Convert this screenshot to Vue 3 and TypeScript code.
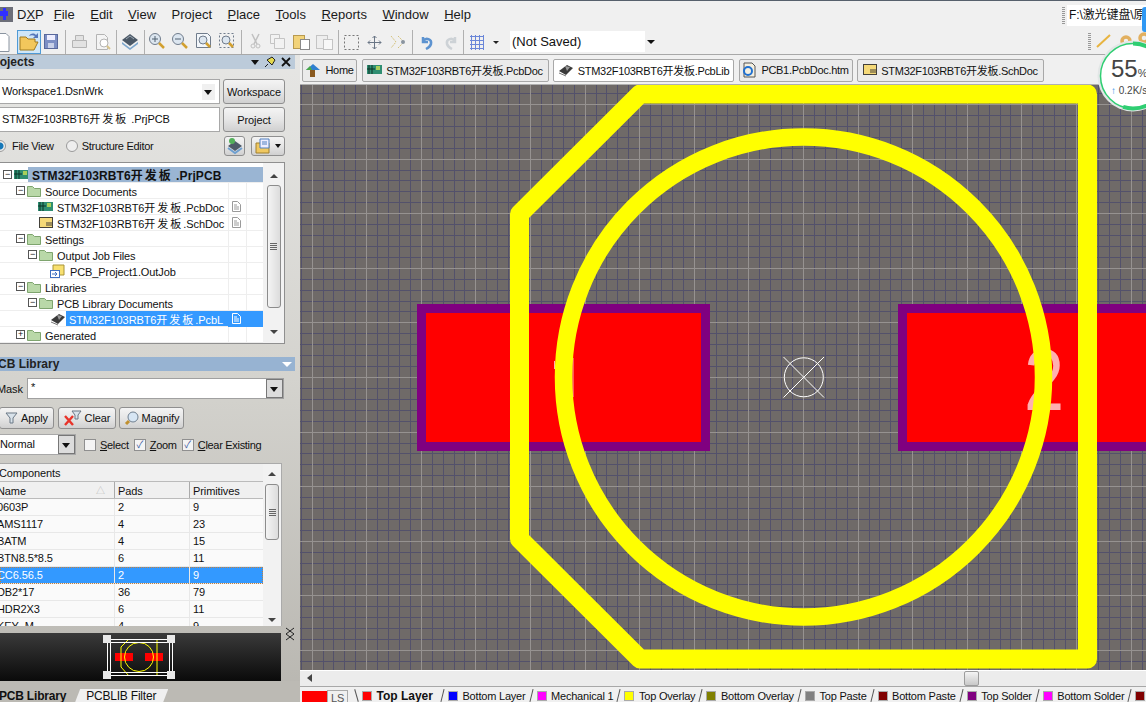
<script setup lang="ts">
const menus = [
  { pre: '', key: 'F', post: 'ile' },
  { pre: '', key: 'E', post: 'dit' },
  { pre: '', key: 'V', post: 'iew' },
  { pre: 'Pro', key: 'j', post: 'ect' },
  { pre: '', key: 'P', post: 'lace' },
  { pre: '', key: 'T', post: 'ools' },
  { pre: '', key: 'R', post: 'eports' },
  { pre: '', key: 'W', post: 'indow' },
  { pre: '', key: 'H', post: 'elp' }
]

const docTabs = [
  { label: 'Home', kind: 'home', active: false, w: 55 },
  { label: 'STM32F103RBT6开发板.PcbDoc', kind: 'pcb', active: false, w: 187 },
  { label: 'STM32F103RBT6开发板.PcbLib', kind: 'lib', active: true, w: 181 },
  { label: 'PCB1.PcbDoc.htm', kind: 'htm', active: false, w: 114 },
  { label: 'STM32F103RBT6开发板.SchDoc', kind: 'sch', active: false, w: 187 }
]

interface TreeRow {
  label: string
  indent: number
  sign: string
  icon: string
  selected?: boolean
  root?: boolean
  doc?: boolean
}

const tree: TreeRow[] = [
  { label: 'STM32F103RBT6开发板 .PrjPCB', indent: 3, sign: '-', icon: 'pcb', root: true },
  { label: 'Source Documents', indent: 16, sign: '-', icon: 'folder' },
  { label: 'STM32F103RBT6开发板.PcbDoc', indent: 38, sign: '', icon: 'pcb', doc: true },
  { label: 'STM32F103RBT6开发板.SchDoc', indent: 39, sign: '', icon: 'sch', doc: true },
  { label: 'Settings', indent: 16, sign: '-', icon: 'folder' },
  { label: 'Output Job Files', indent: 28, sign: '-', icon: 'folder' },
  { label: 'PCB_Project1.OutJob', indent: 50, sign: '', icon: 'job' },
  { label: 'Libraries', indent: 16, sign: '-', icon: 'folder' },
  { label: 'PCB Library Documents', indent: 28, sign: '-', icon: 'folder' },
  { label: 'STM32F103RBT6开发板.PcbL', indent: 50, sign: '', icon: 'lib', selected: true, doc: true },
  { label: 'Generated', indent: 16, sign: '+', icon: 'folder' }
]

const components = [
  { name: '0603P', pads: 2, prims: 9 },
  { name: 'AMS1117', pads: 4, prims: 23 },
  { name: 'BATM', pads: 4, prims: 15 },
  { name: 'BTN8.5*8.5', pads: 6, prims: 11 },
  { name: 'CC6.56.5', pads: 2, prims: 9, selected: true },
  { name: 'DB2*17', pads: 36, prims: 79 },
  { name: 'HDR2X3', pads: 6, prims: 11 },
  { name: 'KEY_M', pads: 4, prims: 9 }
]

const layers = [
  { name: 'Top Layer', color: '#ff0000', bold: true },
  { name: 'Bottom Layer', color: '#0000ff' },
  { name: 'Mechanical 1', color: '#ff00ff' },
  { name: 'Top Overlay', color: '#ffff00' },
  { name: 'Bottom Overlay', color: '#808000' },
  { name: 'Top Paste', color: '#808080' },
  { name: 'Bottom Paste', color: '#800000' },
  { name: 'Top Solder', color: '#800080' },
  { name: 'Bottom Solder', color: '#ff00ff' },
  { name: '', color: '#800000' }
]

// wide CJK characters get their own span, the reference spaces them out
function segments(label: string) {
  return label.split(/([\u4e00-\u9fff]+)/).filter(Boolean).map((text) => ({
    text,
    cjk: /[\u4e00-\u9fff]/.test(text)
  }))
}

// grid lines snapped to whole pixels, every 5th one is the bright one
const gridStep = 10.92
const originX = 803
const originY = 377
const gridX: { at: number; major: boolean }[] = []
const gridY: { at: number; major: boolean }[] = []
for (let k = -46; k <= 32; k++) {
  gridX.push({ at: Math.round(originX + k * gridStep) + 0.5, major: k % 5 === 0 })
}
for (let k = -27; k <= 27; k++) {
  gridY.push({ at: Math.round(originY + k * gridStep) + 0.5, major: k % 5 === 0 })
}
</script>

<template>
  <div class="app">
    <header class="menubar">
      <svg class="dxp-logo" width="13" height="15" viewBox="0 0 13 15">
        <rect width="13" height="15" fill="#6c6e78" />
        <path d="M0 4h3V1h3v3h2v5H6v4H3V9H0z" fill="#3030ff" />
      </svg>
      <span class="menu-item dxp">D<u>X</u>P</span>
      <span v-for="m in menus" :key="m.post" class="menu-item">{{ m.pre }}<u>{{ m.key }}</u>{{ m.post }}</span>
      <div class="path-box">
        <span class="grip"></span>
        <span class="path-text">F:\激光键盘\原</span>
      </div>
      <span class="blue-tab"></span>
    </header>

    <div class="toolbar">
      <svg class="tb-svg" width="506" height="28" viewBox="0 0 506 28">
        <!-- new, open, save -->
        <path d="M-4 5.500h10l3 3v15h-13z" fill="#fff" stroke="#8a94a0" />
        <rect x="17.500" y="2.500" width="23" height="23" fill="#cfe6f8" stroke="#4f9ad6" />
        <path d="M20 22v-13h6l2 2h7v3h3l-4 8z" fill="#f2c75c" stroke="#a07a20" />
        <path d="M29 8c2-3 5-3 7-1l2-2v5h-5l2-2c-2-1-4-1-6 0z" fill="#5577bb" />
        <rect x="44.500" y="6.500" width="13" height="14" fill="#7d8fc4" stroke="#59689c" />
        <rect x="47" y="7" width="8" height="5" fill="#eef" />
        <rect x="48" y="15" width="6" height="5" fill="#c8d0e8" />
        <g fill="#e2e2e2" stroke="#b4b4b4">
          <path d="M72.500 12.500h14v7h-14z" /><path d="M75.500 7.500h8v5h-8z" />
          <path d="M96.500 6.500h8l3 3v12h-11z" fill="#f4f4f4" />
          <circle cx="104" cy="15" r="4" fill="#fff" />
        </g>
        <path d="M107 18l3 3" stroke="#d8c48c" stroke-width="2" />
        <path d="M122 12l8-6 8 6-8 6z" fill="#4b5866" />
        <path d="M122 14l8 6 8-6v2l-8 6-8-6z" fill="#7da6cc" />
        <path d="M126 11l4-3 4 3" stroke="#9aa6b2" fill="none" />
        <g fill="#dce6f0" stroke="#707c8c">
          <circle cx="155" cy="11" r="5.500" /><circle cx="178" cy="11" r="5.500" />
          <path d="M196.500 5.500h11l3 3v11h-14z" fill="#f2f6fa" />
          <circle cx="203" cy="12" r="4" />
          <rect x="219.500" y="5.500" width="14" height="14" fill="none" stroke-dasharray="2 2" />
          <circle cx="226" cy="12" r="4" />
        </g>
        <path d="M152 11h6M155 8v6M175 11h6" stroke="#506070" fill="none" />
        <path d="M159 15l5 5M182 15l5 5M206 15l4 4M229 15l4 4" stroke="#d2a030" stroke-width="2.500" fill="none" />
        <path d="M252 6l5 10M259 6l-5 10" stroke="#c0c0c0" stroke-width="1.500" fill="none" />
        <circle cx="253" cy="18" r="2" fill="none" stroke="#c0c0c0" /><circle cx="258" cy="18" r="2" fill="none" stroke="#c0c0c0" />
        <path d="M270.500 6.500h9v9h-9z" fill="#f2f2f2" stroke="#c4c4c4" />
        <path d="M274.500 10.500h10v10h-10z" fill="#f2f2f2" stroke="#c4c4c4" />
        <rect x="293.500" y="7.500" width="11" height="13" fill="#f2d37a" stroke="#b89a50" />
        <rect x="300.500" y="11.500" width="9" height="10" fill="#fff" stroke="#8a8a8a" />
        <rect x="316.500" y="7.500" width="11" height="13" fill="#eee" stroke="#c4c4c4" />
        <rect x="323.500" y="11.500" width="9" height="10" fill="#f8f8f8" stroke="#c4c4c4" />
        <g stroke="#b0b0b0" fill="none">
          <path d="M65.500 2v24M116.500 2v24M144.500 2v24M241.500 2v24M338.500 2v24" />
          <path d="M412.500 2v24M463.500 2v24" />
        </g>
        <rect x="344.500" y="7.500" width="14" height="14" fill="none" stroke="#777" stroke-dasharray="2 2" />
        <path d="M374.500 8v13M368 14.500h13M372.500 10l2-2 2 2M372.500 19l2 2 2-2M370 12.500l-2 2 2 2M379 12.500l2 2-2 2" stroke="#6a7686" fill="none" />
        <path d="M391 8l5 6-5 6M398 8l6 6-6 6" stroke="#d4c27c" fill="none" stroke-dasharray="2 1" />
        <circle cx="403" cy="14" r="2" fill="#8a94a0" />
        <path d="M423 9v5h5M423 13c3-4 9-2 8 3-1 3-3 4-5 5" stroke="#5d93d0" stroke-width="2.500" fill="none" />
        <path d="M455 9v5h-5M455 13c-3-4-9-2-8 3 1 3 3 4 5 5" stroke="#cdd2d6" stroke-width="2.500" fill="none" />
        <path d="M470 8.500h14M470 12.500h14M470 16.500h14M470 20.500h14M471.500 7v15M475.500 7v15M479.500 7v15M483.500 7v15" stroke="#6a86d8" fill="none" />
        <path d="M493 13h6l-3 3z" fill="#222" />
      </svg>
      <div class="saved-box"><span>(Not Saved)</span><span class="saved-arrow"></span></div>
      <div class="tb-right">
        <span class="grip-v"></span>
        <svg width="53" height="26" viewBox="0 0 53 26">
          <path d="M4 19L17 7" stroke="#e8b440" stroke-width="2" />
          <circle cx="33" cy="13" r="4" fill="none" stroke="#e2b060" stroke-width="3.500" />
          <circle cx="51" cy="10" r="4" fill="none" stroke="#e2b060" stroke-width="3.500" />
        </svg>
      </div>
    </div>

    <main class="workspace">
      <aside class="sidebar">
        <div class="panel-head light">
          <span class="cut-more">Projects</span>
          <span class="head-icons">
            <span class="arrow-down"></span>
            <svg width="12" height="12" viewBox="0 0 12 12"><path d="M1 11l3-3M3 4l5-3 3 3-3 5z" fill="#e4d94e" stroke="#222" /></svg>
            <svg width="10" height="10" viewBox="0 0 10 10"><path d="M1 1l8 8M9 1l-8 8" stroke="#111" stroke-width="1.800" /></svg>
          </span>
        </div>

        <div class="proj-row">
          <div class="field">Workspace1.DsnWrk<span class="field-arrow"></span></div>
          <button class="btn wide">Workspace</button>
        </div>
        <div class="proj-row">
          <div class="field">STM32F103RBT6<span class="cjk">开发板</span> .PrjPCB</div>
          <button class="btn wide">Project</button>
        </div>
        <div class="view-row">
          <span class="radio on"></span><span class="view-a">File View</span>
          <span class="radio"></span><span class="view-b">Structure Editor</span>
          <span class="spacer"></span>
          <button class="btn ico">
            <svg width="18" height="18" viewBox="0 0 18 18"><path d="M2 9l7-5 7 5-7 5z" fill="#4d5a68" /><path d="M2 11l7 5 7-5" fill="none" stroke="#6fa0d0" stroke-width="2" /><circle cx="6" cy="4" r="3" fill="#52b05a" /></svg>
          </button>
          <button class="btn ico two">
            <svg width="17" height="18" viewBox="0 0 17 18"><path d="M1 6h13v10H1z" fill="#f0c860" stroke="#a08030" /><path d="M5 2h9v9H5z" fill="#eef" stroke="#5080c0" /><path d="M7 5h5M7 7h5" stroke="#5080c0" /></svg>
            <span class="mini-arrow"></span>
          </button>
        </div>

        <div class="tree-box">
          <div class="tree-rows">
            <div v-for="r in tree" :key="r.label + r.indent" class="tree-row">
              <div class="tree-main" :style="{ paddingLeft: r.indent + 'px' }">
                <span v-if="r.sign" class="sign">{{ r.sign === '+' ? '+' : '−' }}</span>
                <svg v-if="r.icon === 'folder'" class="t-icon" width="14" height="12" viewBox="0 0 14 12"><path d="M0.500 11.500v-10h5l2 2h6v8z" fill="#b9d8a8" stroke="#7ea46e" /></svg>
                <svg v-else-if="r.icon === 'pcb'" class="t-icon" width="15" height="12" viewBox="0 0 15 12"><rect x="0" y="1" width="15" height="9" fill="#2f8e72" /><path d="M2 1v9M5 1v9M0 5h8" stroke="#0c3528" /><rect x="9" y="2" width="4" height="4" fill="#a8d05a" /></svg>
                <svg v-else-if="r.icon === 'sch'" class="t-icon" width="14" height="12" viewBox="0 0 14 12"><rect x="0.500" y="0.500" width="13" height="10" fill="#f5d978" stroke="#44413a" /><path d="M7 8h6M7 6h6" stroke="#44413a" /></svg>
                <svg v-else-if="r.icon === 'job'" class="t-icon" width="16" height="14" viewBox="0 0 16 14"><path d="M3 1h11v10H3z" fill="#f8e070" stroke="#a89438" /><rect x="0.500" y="6.500" width="9" height="7" fill="#fff" stroke="#4070c0" /><path d="M2 10h5M5 8l2 2-2 2" stroke="#4070c0" fill="none" /></svg>
                <svg v-else class="t-icon" width="16" height="14" viewBox="0 0 16 14"><path d="M1 8l8-6 6 3-7 7z" fill="#3a3a3a" /><path d="M7 3l5 1-3 4z" fill="#9a9a9a" /><path d="M1 10l7 3" stroke="#777" /></svg>
                <span class="t-label" :class="{ root: r.root, sel: r.selected }">
                  <span v-for="(s, i) in segments(r.label)" :key="i" :class="{ cjk: s.cjk }">{{ s.text }}</span>
                </span>
              </div>
              <template v-if="!r.root">
                <span class="t-cell" :class="{ sel: r.selected }">
                  <svg v-if="r.doc" width="9" height="11" viewBox="0 0 9 11"><path d="M0.500 0.500h5l3 3v7h-8zM2 4h3M2 6h5M2 8h5" fill="none" :stroke="r.selected ? '#fff' : '#9a9a9a'" /></svg>
                </span>
                <span class="t-cell narrow" :class="{ sel: r.selected }"></span>
              </template>
            </div>
          </div>
          <div class="scroll-v">
            <span class="tri-up"></span>
            <div class="thumb tree-thumb"><span class="thumb-grip"></span></div>
            <span class="tri-down"></span>
          </div>
        </div>

        <div class="panel-head blue">
          <span>PCB Library</span>
          <span class="arrow-down white"></span>
        </div>

        <div class="mask-row">
          <span class="mask-label">Mask</span>
          <div class="mask-field">*<span class="combo-btn"></span></div>
        </div>
        <div class="action-row">
          <button class="btn act apply">
            <svg width="13" height="12" viewBox="0 0 13 12"><path d="M1 1h11L8 6v5H5V6z" fill="#d8e2ea" stroke="#6a7886" /></svg>Apply
          </button>
          <button class="btn act clear">
            <svg width="18" height="16" viewBox="0 0 18 16"><path d="M1 6l8 9M9 6l-8 9" stroke="#e8342a" stroke-width="2.400" /><path d="M8 1h9l-3 4v4h-3V5z" fill="#d8e2ea" stroke="#6a7886" /></svg>Clear
          </button>
          <button class="btn act magnify">
            <svg width="15" height="15" viewBox="0 0 15 15"><circle cx="9" cy="6" r="5" fill="#d7e6f4" stroke="#708090" /><path d="M5 10l-3 3" stroke="#c09030" stroke-width="3" /></svg>Magnify
          </button>
        </div>
        <div class="mode-row">
          <div class="mode-field">Normal<span class="combo-btn"></span></div>
          <span class="check"></span><span class="check-text"><u>S</u>elect</span>
          <span class="check on">✓</span><span class="check-text"><u>Z</u>oom</span>
          <span class="check on">✓</span><span class="check-text"><u>C</u>lear Existing</span>
        </div>

        <div class="table-box">
          <div class="table-main">
            <div class="table-title">Components</div>
            <div class="comp-row head">
              <span class="c-name">Name<i class="sort">△</i></span>
              <span class="c-pads">Pads</span>
              <span class="c-prims">Primitives</span>
            </div>
            <div v-for="c in components" :key="c.name" class="comp-row" :class="{ selected: c.selected }">
              <span class="c-name">{{ c.name }}</span>
              <span class="c-pads">{{ c.pads }}</span>
              <span class="c-prims">{{ c.prims }}</span>
            </div>
          </div>
          <div class="scroll-v table-scroll">
            <span class="tri-up"></span>
            <div class="thumb table-thumb"><span class="thumb-grip"></span></div>
            <span class="tri-down"></span>
          </div>
        </div>

        <div class="preview-wrap">
          <div class="preview">
            <svg width="72" height="44" viewBox="0 0 72 44">
              <rect x="12" y="18" width="18" height="8" fill="#ff0000" />
              <rect x="42" y="18" width="18" height="8" fill="#ff0000" />
              <path d="M26 4L18 12V32L26 41M54 4V41" fill="none" stroke="#ffff00" />
              <circle cx="36" cy="22" r="14.500" fill="none" stroke="#ffff00" />
              <path d="M4.500 4v36M7.500 4v36M66.500 4v36M69.500 4v36M4 4.500h66M4 7.500h66M4 37.500h66M4 40.500h66" fill="none" stroke="#fff" />
              <g fill="#e8e8e8"><rect x="0" y="0" width="8" height="8" /><rect x="64" y="0" width="8" height="8" /><rect x="0" y="36" width="8" height="8" /><rect x="64" y="36" width="8" height="8" /></g>
            </svg>
          </div>
          <svg class="collapse" width="10" height="14" viewBox="0 0 10 14"><path d="M1 1l8 6M9 1L1 7M1 7l8 6M9 7l-8 6" stroke="#222" fill="none" /></svg>
        </div>
        <div class="panel-tabs">
          <span class="p-tab active">PCB Library</span>
          <span class="p-tab">PCBLIB Filter</span>
        </div>
      </aside>

      <section class="editor">
        <div class="doc-tabs">
          <div v-for="t in docTabs" :key="t.kind" class="doc-tab" :class="{ active: t.active }" :style="{ width: t.w + 'px' }">
            <svg v-if="t.kind === 'home'" width="16" height="14" viewBox="0 0 16 14"><path d="M8 1l7 6H1z" fill="#2f7fd0" /><rect x="5" y="7" width="5" height="7" fill="#8a5a20" /><path d="M1 7l4-4 2 4z" fill="#4aa848" /></svg>
            <svg v-else-if="t.kind === 'pcb'" width="15" height="12" viewBox="0 0 15 12"><rect x="0" y="1" width="15" height="9" fill="#2f8e72" /><path d="M2 1v9M5 1v9M0 5h8" stroke="#0c3528" /><rect x="9" y="2" width="4" height="4" fill="#a8d05a" /></svg>
            <svg v-else-if="t.kind === 'lib'" width="16" height="14" viewBox="0 0 16 14"><path d="M1 8l8-6 6 3-7 7z" fill="#3a3a3a" /><path d="M7 3l5 1-3 4z" fill="#9a9a9a" /><path d="M1 10l7 3" stroke="#777" /></svg>
            <svg v-else-if="t.kind === 'htm'" width="15" height="16" viewBox="0 0 15 16"><path d="M2 1h8l3 3v11H2z" fill="#f4efe0" stroke="#555" /><circle cx="6" cy="9" r="4" fill="none" stroke="#2070d0" stroke-width="2" /></svg>
            <svg v-else width="14" height="12" viewBox="0 0 14 12"><rect x="0.500" y="0.500" width="13" height="10" fill="#f5d978" stroke="#44413a" /><path d="M7 8h6M7 6h6" stroke="#44413a" /></svg>
            <span>{{ t.label }}</span>
          </div>
        </div>

        <div class="canvas">
          <svg width="846" height="585" viewBox="300 85 846 585">
            <rect x="300" y="85" width="846" height="585" fill="#6f6a68" />
            <g shape-rendering="crispEdges">
              <template v-for="g in gridX" :key="'x' + g.at">
                <line v-if="!g.major" :x1="g.at" y1="85" :x2="g.at" y2="670" stroke="#53516b" />
              </template>
              <template v-for="g in gridY" :key="'y' + g.at">
                <line v-if="!g.major" x1="300" :y1="g.at" x2="1146" :y2="g.at" stroke="#53516b" />
              </template>
              <template v-for="g in gridX" :key="'mx' + g.at">
                <line v-if="g.major" :x1="g.at" y1="85" :x2="g.at" y2="670" stroke="#969290" />
              </template>
              <template v-for="g in gridY" :key="'my' + g.at">
                <line v-if="g.major" x1="300" :y1="g.at" x2="1146" :y2="g.at" stroke="#969290" />
              </template>
            </g>
            <rect x="417" y="304" width="293" height="147" fill="#800080" />
            <rect x="426" y="313" width="275" height="129" fill="#ff0000" />
            <rect x="898" y="304" width="260" height="147" fill="#800080" />
            <rect x="907" y="313" width="250" height="129" fill="#ff0000" />
            <rect x="554" y="361" width="1" height="8" fill="#ffb0b0" />
            <rect x="572.500" y="358" width="1" height="39" fill="#ffb0b0" />
            <text class="pad-num" transform="translate(1024 410) scale(0.82 1)">2</text>
            <path d="M640 94H1087.500V659H640L519.500 539V214Z" fill="none" stroke="#ffff00" stroke-width="19" stroke-linejoin="round" />
            <circle cx="803.500" cy="377" r="240" fill="none" stroke="#ffff00" stroke-width="17.500" />
            <circle cx="803.800" cy="377.300" r="19.500" fill="none" stroke="#fff" />
            <path d="M783.500 357l40.500 40.500M824 357l-40.500 40.500" stroke="#fff" />
          </svg>
        </div>

        <div class="scroll-h">
          <span class="tri-left"></span>
          <span class="h-thumb"></span>
        </div>

        <div class="layer-tabs">
          <span class="swatch-big"></span>
          <span class="ls">LS</span>
          <span v-for="l in layers" :key="l.name + l.color" class="layer-tab" :class="{ bold: l.bold }">
            <span class="layer-swatch" :style="{ background: l.color }"></span>{{ l.name }}
          </span>
        </div>
      </section>
    </main>

    <div class="net-meter">
      <svg class="meter-ring" width="72" height="72" viewBox="0 0 72 72">
        <circle cx="36" cy="36" r="35.500" fill="#e2e6e6" />
        <circle cx="36" cy="36" r="32.500" fill="#fff" stroke="#2fce72" stroke-width="1.500" />
        <circle cx="36" cy="36" r="32.500" fill="none" stroke="#2fce72" stroke-width="4" stroke-dasharray="112 204" transform="rotate(-90 36 36)" />
      </svg>
      <span class="pct">55<small>%</small></span>
      <span class="speed"><i>↑</i> 0.2K/s</span>
    </div>
  </div>
</template>

<style>
html, body { margin: 0; overflow: hidden; background: #f0f0f0; }
</style>

<style scoped>
.app {
  position: relative;
  width: 1146px;
  height: 702px;
  overflow: hidden;
  background: #f0f0f0;
  font-family: "Liberation Sans", "Noto Sans CJK SC", sans-serif;
  font-size: 11px;
  letter-spacing: -0.1px;
  color: #111;
  border-top: 1px solid #56606c;
  box-sizing: border-box;
  display: flex;
  flex-direction: column;
}

.menubar {
  height: 27px;
  display: flex;
  align-items: center;
  flex: none;
  background: #f0f0f0;
  position: relative;
}

.dxp-logo {
  margin-right: 4px;
  flex: none;
}

.menu-item {
  font-size: 13px;
  letter-spacing: 0;
  margin-right: 15.5px;
  white-space: nowrap;
  color: #1a1a1a;
}

.menu-item.dxp {
  margin-right: 10px;
}

.path-box {
  position: absolute;
  left: 1062px;
  top: 4px;
  width: 84px;
  height: 21px;
  display: flex;
  align-items: center;
}

.grip {
  width: 3px;
  height: 17px;
  margin-right: 2px;
  background: repeating-linear-gradient(to bottom, #999 0 1px, transparent 1px 2px);
}

.path-text {
  flex: 1;
  background: #fff;
  height: 21px;
  line-height: 21px;
  font-size: 12px;
  padding-left: 2px;
  white-space: nowrap;
  overflow: hidden;
}

.blue-tab {
  position: absolute;
  left: 1142px;
  top: 6px;
  width: 6px;
  height: 25px;
  border-radius: 3px;
  background: #2f98f4;
}

.toolbar {
  height: 27px;
  box-sizing: border-box;
  flex: none;
  display: flex;
  align-items: flex-start;
  border-bottom: 1px solid #a8a8a8;
}

.tb-svg {
  flex: none;
}

.saved-box {
  width: 147px;
  height: 21px;
  background: #fff;
  font-size: 13px;
  letter-spacing: 0;
  display: flex;
  align-items: center;
  justify-content: space-between;
  padding-left: 2px;
  box-sizing: border-box;
  margin: 3px 0 0 4px;
}

.saved-arrow {
  width: 12px;
  height: 21px;
  background: #f0f0f0;
  position: relative;
}

.saved-arrow::after {
  content: "";
  position: absolute;
  left: 2px;
  top: 9px;
  border: 4px solid transparent;
  border-top-color: #111;
  border-bottom: 0;
}

.tb-right {
  margin-left: auto;
  display: flex;
  align-items: flex-start;
}

.grip-v {
  width: 3px;
  height: 17px;
  margin: 5px 2px 0 0;
  background: repeating-linear-gradient(to bottom, #999 0 1px, transparent 1px 2px);
}

.workspace {
  flex: 1;
  min-height: 0;
  display: flex;
}

.sidebar {
  width: 300px;
  box-sizing: border-box;
  padding-right: 4px;
  flex: none;
  background: linear-gradient(to bottom, #e6e6e4, #d4d3ce 50%, #b8b6b0);
  display: flex;
  flex-direction: column;
  overflow: hidden;
}

.panel-head {
  height: 14px;
  line-height: 16px;
  flex: none;
  font-weight: 700;
  font-size: 12px;
  letter-spacing: 0;
  color: #222;
  display: flex;
  justify-content: space-between;
  align-items: center;
  padding-right: 3px;
  margin-right: 1px;
}

.panel-head > span:first-child {
  margin-left: -10px;
}

.panel-head > span.cut-more {
  margin-left: -13px;
}

.panel-head.light {
  background: #bccbda;
  margin-bottom: 10px;
}

.panel-head.blue {
  background: #97b3d2;
  margin: 13px 1px 0 0;
}

.head-icons {
  display: flex;
  align-items: center;
  gap: 5px;
  padding-right: 1px;
}

.arrow-down {
  width: 0;
  height: 0;
  border: 4px solid transparent;
  border-top: 5px solid #111;
  border-bottom: 0;
}

.arrow-down.white {
  border-top-color: #fff;
  border-left-width: 5px;
  border-right-width: 5px;
}

.proj-row {
  display: flex;
  height: 25px;
  margin-bottom: 3px;
  gap: 3px;
}

.field {
  width: 220px;
  flex: none;
  box-sizing: border-box;
  background: #fff;
  border: 1px solid #a8a8a8;
  border-left: 0;
  height: 25px;
  line-height: 23px;
  padding-left: 2px;
  position: relative;
  white-space: nowrap;
}

.cjk {
  letter-spacing: 2px;
}

.field-arrow {
  position: absolute;
  right: 4px;
  top: 4px;
  width: 13px;
  height: 16px;
  background: #f0f0f0;
}

.field-arrow::after {
  content: "";
  position: absolute;
  left: 2px;
  top: 6px;
  border: 4px solid transparent;
  border-top: 5px solid #111;
  border-bottom: 0;
}

.btn {
  box-sizing: border-box;
  border: 1px solid #8f8f8f;
  border-radius: 3px;
  background: linear-gradient(to bottom, #f4f4f4, #e6e6e6 50%, #d0d0d0);
  font: inherit;
  letter-spacing: inherit;
  color: #111;
  padding: 0;
  display: inline-flex;
  align-items: center;
  justify-content: center;
}

.btn.wide {
  width: 62px;
  height: 25px;
}

.view-row {
  display: flex;
  align-items: center;
  height: 20px;
  margin: 1px 11px 6px 0;
  white-space: nowrap;
  letter-spacing: -0.3px;
}

.radio {
  width: 12px;
  height: 12px;
  box-sizing: border-box;
  border-radius: 50%;
  border: 1px solid #9a9a9a;
  background: #eee;
  flex: none;
}

.radio.on {
  margin-left: -6px;
  background: radial-gradient(circle, #1678b8 0 3px, #eee 4px);
}

.view-a {
  margin: 0 12px 0 6px;
}

.view-b {
  margin-left: 4px;
}

.spacer {
  flex: 1;
}

.btn.ico {
  width: 21px;
  height: 20px;
}

.btn.ico.two {
  width: 34px;
  margin-left: 6px;
  gap: 3px;
}

.mini-arrow {
  border: 3px solid transparent;
  border-top: 4px solid #111;
  border-bottom: 0;
}

.tree-box {
  height: 182px;
  flex: none;
  box-sizing: border-box;
  margin-right: 11px;
  background: #fff;
  border: 1px solid #8f8f8f;
  border-left: 0;
  display: flex;
  overflow: hidden;
}

.tree-rows {
  width: 263px;
  flex: none;
  padding-top: 4px;
}

.tree-row {
  height: 16px;
  display: flex;
  white-space: nowrap;
}

.tree-main {
  width: 228px;
  flex: 1;
  min-width: 0;
  display: flex;
  align-items: center;
  overflow: hidden;
  box-sizing: border-box;
  border-bottom: 1px solid #eee;
}

.sign {
  width: 9px;
  height: 9px;
  box-sizing: border-box;
  line-height: 6px;
  border: 1px solid #555;
  font-size: 9px;
  text-align: center;
  margin-right: 2px;
  flex: none;
  background: #fff;
}

.t-icon {
  flex: none;
  margin-right: 3px;
}

.t-label {
  white-space: nowrap;
  padding-left: 1px;
  height: 16px;
  line-height: 18px;
}

.t-label.root {
  flex: 1;
  background: #9ab5d3;
  font-weight: 700;
  font-size: 12px;
  letter-spacing: 0.1px;
  margin-left: -4px;
  padding-left: 4px;
}

.t-label.sel {
  flex: 1;
  background: #3399ff;
  color: #fff;
  margin-left: -3px;
  padding-left: 3px;
}

.t-cell {
  width: 18px;
  flex: none;
  box-sizing: border-box;
  border-left: 1px solid #eee;
  border-bottom: 1px solid #eee;
  display: flex;
  align-items: center;
  justify-content: center;
  padding-right: 3px;
}

.t-cell.narrow {
  width: 17px;
}

.t-cell.sel {
  background: #3399ff;
  border-color: #3399ff;
}

.scroll-v {
  flex: 1;
  background: #f2f2f2;
  display: flex;
  flex-direction: column;
  align-items: center;
}

.tri-up, .tri-down {
  width: 0;
  height: 0;
  border: 4px solid transparent;
  flex: none;
}

.tri-up {
  border-bottom: 4px solid #444;
  border-top: 0;
  margin: 11px 0 7px;
}

.tri-down {
  border-top: 4px solid #444;
  border-bottom: 0;
  margin-top: auto;
  margin-bottom: 9px;
}

.table-scroll .tri-up {
  margin: 8px 0 8px;
}

.table-scroll .tri-down {
  margin-bottom: 4px;
}

.thumb {
  width: 14px;
  box-sizing: border-box;
  border: 1px solid #8c8c8c;
  border-radius: 3px;
  background: linear-gradient(to right, #f4f4f4, #dcdcdc);
  display: flex;
  align-items: center;
  justify-content: center;
}

.tree-thumb {
  height: 123px;
}

.table-thumb {
  height: 56px;
}

.thumb-grip {
  width: 7px;
  height: 7px;
  background: repeating-linear-gradient(to bottom, #666 0 1px, transparent 1px 2px);
}

.mask-row {
  display: flex;
  align-items: center;
  margin-top: 7px;
  height: 21px;
  gap: 5px;
  flex: none;
}

.mask-label {
  margin-left: -3px;
  width: 25px;
  flex: none;
}

.mask-field {
  width: 257px;
  height: 21px;
  box-sizing: border-box;
  background: #fff;
  border: 1px solid #a0a0a0;
  position: relative;
  padding-left: 3px;
  line-height: 16px;
}

.combo-btn {
  position: absolute;
  right: 0;
  top: 0;
  bottom: 0;
  width: 17px;
  background: #dcdcdc;
  border: 1px solid #777;
  box-sizing: border-box;
}

.combo-btn::after {
  content: "";
  position: absolute;
  left: 3px;
  top: 7px;
  border: 4px solid transparent;
  border-top: 5px solid #111;
  border-bottom: 0;
}

.action-row {
  display: flex;
  margin-top: 8px;
  height: 22px;
  gap: 4px;
  flex: none;
}

.btn.act {
  gap: 3px;
  height: 22px;
}

.btn.apply {
  width: 55px;
  margin-left: -1px;
}

.btn.clear {
  width: 58px;
  margin-right: -1px;
}

.btn.magnify {
  width: 65px;
}

.mode-row {
  display: flex;
  align-items: center;
  margin-top: 5px;
  height: 21px;
  flex: none;
  white-space: nowrap;
}

.mode-field {
  width: 76px;
  height: 21px;
  box-sizing: border-box;
  background: #fff;
  border: 1px solid #a8a8a8;
  border-left: 0;
  line-height: 19px;
  position: relative;
  margin-right: 8px;
}

.check {
  width: 12px;
  height: 12px;
  box-sizing: border-box;
  border: 1px solid #8f8f8f;
  background: #f4f4f4;
  font-size: 10px;
  line-height: 10px;
  text-align: center;
  color: #3a5aa0;
  flex: none;
}

.check-text {
  margin: 0 5px 0 4px;
  letter-spacing: -0.3px;
}

.table-box {
  margin-top: 8px;
  margin-right: 14px;
  height: 163px;
  flex: none;
  display: flex;
  border: 1px solid #aaa;
  border-left: 0;
  border-bottom: 0;
  box-sizing: border-box;
  background: #fafafa;
  overflow: hidden;
}

.table-main {
  width: 263px;
  flex: none;
}

.table-title {
  height: 18px;
  line-height: 19px;
  background: #f0f0f0;
  border-bottom: 1px solid #bbb;
  box-sizing: border-box;
  text-indent: -1px;
}

.comp-row {
  display: flex;
  height: 17px;
  line-height: 16px;
  border-bottom: 1px solid #e8e8e8;
  box-sizing: border-box;
  white-space: nowrap;
}

.comp-row.head {
  background: #f0f0f0;
  border-bottom: 1px solid #bbb;
  line-height: 18px;
}

.comp-row.head span {
  border-right-color: #aaa;
}

.comp-row.selected {
  background: #3399ff;
  color: #fff;
  outline: 1px dotted #c08040;
  outline-offset: -1px;
}

.c-name {
  width: 115px;
  flex: none;
  box-sizing: border-box;
  border-right: 1px solid #e8e8e8;
  position: relative;
  text-indent: -3px;
}

.sort {
  position: absolute;
  right: 9px;
  top: 0;
  font-style: normal;
  font-size: 9px;
  color: #bbb;
}

.c-pads {
  width: 75px;
  flex: none;
  box-sizing: border-box;
  border-right: 1px solid #e8e8e8;
  padding-left: 3px;
}

.c-prims {
  flex: 1;
  padding-left: 3px;
}

.preview-wrap {
  height: 55px;
  flex: none;
  position: relative;
  padding-top: 7px;
  box-sizing: border-box;
}

.preview {
  width: 281px;
  height: 48px;
  box-sizing: border-box;
  background: linear-gradient(to bottom, #3a3a3a, #0a0a0a);
  display: flex;
  align-items: center;
  justify-content: center;
  padding-right: 4px;
}

.collapse {
  position: absolute;
  left: 285px;
  top: 1px;
}

.panel-tabs {
  flex: 1;
  display: flex;
  align-items: flex-end;
  background: #bcbab4;
  white-space: nowrap;
  margin-right: -4px;
  font-size: 12px;
  letter-spacing: -0.2px;
}

.p-tab {
  height: 13px;
  line-height: 14px;
  padding: 0 12px 0 11px;
  background: #f0f0f0;
  margin-left: 8px;
  clip-path: polygon(5px 0, 100% 0, calc(100% - 5px) 100%, 0 100%);
}

.p-tab.active {
  font-weight: 700;
  margin-left: -1px;
  padding: 0 1px 0 0;
  background: transparent;
  clip-path: none;
}

.editor {
  flex: 1;
  min-width: 0;
  display: flex;
  flex-direction: column;
}

.doc-tabs {
  height: 30px;
  flex: none;
  display: flex;
  align-items: center;
  gap: 4.500px;
  padding: 1px 0 0 2px;
  box-sizing: border-box;
  white-space: nowrap;
  border-bottom: 1px solid #b0b0b0;
}

.doc-tab {
  height: 23px;
  box-sizing: border-box;
  border: 1px solid #a8a8a8;
  border-radius: 2px;
  display: flex;
  align-items: center;
  justify-content: center;
  gap: 4px;
  flex: none;
  background: #ebebeb;
  letter-spacing: -0.3px;
  overflow: hidden;
}

.doc-tab.active {
  background: #fff;
}

.canvas {
  height: 585px;
  flex: none;
  overflow: hidden;
}

.canvas svg {
  display: block;
}

.pad-num {
  font-family: "Liberation Sans", sans-serif;
  font-size: 88px;
  fill: #ffb0b0;
}

.scroll-h {
  height: 17px;
  flex: none;
  background: #ececec;
  position: relative;
  border-top: 1px solid #fff;
  border-bottom: 1px solid #a8a8a8;
  box-sizing: border-box;
}

.tri-left {
  position: absolute;
  left: 7px;
  top: 3px;
  border: 4px solid transparent;
  border-right: 5px solid #444;
  border-left: 0;
}

.h-thumb {
  position: absolute;
  left: 664px;
  top: 0;
  width: 15px;
  height: 15px;
  box-sizing: border-box;
  border: 1px solid #9c9c9c;
  border-radius: 2px;
  background: linear-gradient(to bottom, #f4f4f4, #c8c8c8);
}

.layer-tabs {
  flex: 1;
  display: flex;
  align-items: flex-end;
  white-space: nowrap;
  overflow: hidden;
  padding-left: 2px;
  letter-spacing: -0.2px;
}

.swatch-big {
  width: 25px;
  height: 11px;
  background: #ff0000;
  flex: none;
}

.ls {
  width: 21px;
  height: 12px;
  line-height: 14px;
  border: 1px solid #aaa;
  border-bottom: 0;
  box-sizing: border-box;
  text-align: center;
  color: #555;
  flex: none;
  margin-right: 14px;
}

.layer-tab {
  display: inline-flex;
  align-items: center;
  gap: 4.500px;
  height: 13px;
  flex: none;
  margin-right: 11px;
  position: relative;
}

.layer-tab::before {
  content: "";
  position: absolute;
  left: -6px;
  top: 0;
  height: 13px;
  border-left: 1px solid #555;
  transform: rotate(14deg);
}

.layer-tab.bold {
  font-weight: 700;
  font-size: 12px;
  letter-spacing: 0;
  margin-right: 15px;
}

.layer-tab.bold::before {
  transform: rotate(-16deg);
}

.layer-swatch {
  width: 10px;
  height: 10px;
  box-sizing: border-box;
  border: 1px solid #aaa;
  flex: none;
}

.net-meter {
  position: absolute;
  left: 1097px;
  top: 39px;
  width: 72px;
  height: 72px;
  display: flex;
  flex-direction: column;
  align-items: flex-start;
  padding: 17px 0 0 14px;
  box-sizing: border-box;
  color: #444;
}

.meter-ring {
  position: absolute;
  left: 0;
  top: 0;
}

.pct {
  position: relative;
  font-size: 24px;
  letter-spacing: 0;
  line-height: 24px;
  white-space: nowrap;
}

.pct small {
  font-size: 11px;
}

.speed {
  position: relative;
  font-size: 10px;
  letter-spacing: 0;
  white-space: nowrap;
}

.speed i {
  color: #2a8ee8;
  font-style: normal;
  font-weight: 700;
}
</style>
